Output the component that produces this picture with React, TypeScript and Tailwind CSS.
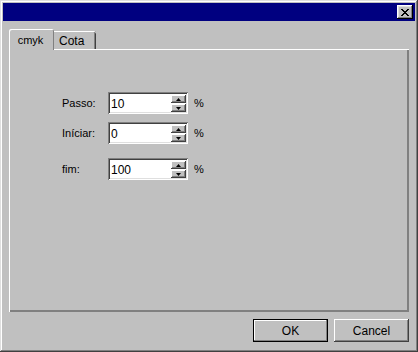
import React from "react";

function SpinArrow({ up }: { up: boolean }) {
  return (
    <svg width="5" height="3" viewBox="0 0 5 3" className="block">
      {up ? (
        <polygon points="2.5,0 5,3 0,3" fill="#000" />
      ) : (
        <polygon points="0,0 5,0 2.5,3" fill="#000" />
      )}
    </svg>
  );
}

function Field({ label, value, mt }: { label: string; value: string; mt: string }) {
  return (
    <div className={`flex items-center ${mt}`}>
      <div className="w-[46px] text-[11px] leading-none">{label}</div>
      <div className="w-[80px] h-[22px] bg-white flex items-center shadow-[inset_1px_1px_#808080,inset_-1px_-1px_#ffffff,inset_2px_2px_#404040,inset_-2px_-2px_#dfdfdf] pl-[3px] pr-[2px]">
        <span className="flex-1 text-[12px] leading-none pt-[1px]">{value}</span>
        <div className="flex flex-col gap-[1px] pt-[1px]">
          <div className="w-[15px] h-[8px] bg-[#c0c0c0] flex items-center justify-center shadow-[inset_-1px_-1px_#404040,inset_1px_1px_#ffffff,inset_-2px_-2px_#808080]">
            <SpinArrow up />
          </div>
          <div className="w-[15px] h-[8px] bg-[#c0c0c0] flex items-center justify-center shadow-[inset_-1px_-1px_#404040,inset_1px_1px_#ffffff,inset_-2px_-2px_#808080]">
            <SpinArrow up={false} />
          </div>
        </div>
      </div>
      <span className="ml-[6px] text-[11px] leading-none">%</span>
    </div>
  );
}

export default function App() {
  return (
    <div
      className="w-[418px] h-[352px] bg-[#c0c0c0] p-[3px] flex flex-col text-black shadow-[inset_-1px_-1px_#404040,inset_1px_1px_#dfdfdf,inset_-2px_-2px_#808080,inset_2px_2px_#ffffff]"
      style={{ fontFamily: '"Liberation Sans", Arial, sans-serif' }}
    >
      {/* Title bar */}
      <div className="h-[18px] bg-[#000080] flex items-center justify-end pr-[2px]">
        <div className="w-[16px] h-[14px] bg-[#c0c0c0] flex items-center justify-center shadow-[inset_-1px_-1px_#000000,inset_1px_1px_#ffffff,inset_-2px_-2px_#808080,inset_2px_2px_#dfdfdf]">
          <svg width="8" height="7" viewBox="0 0 8 7" className="block">
            <path d="M0 0h2v1h1v1h2v-1h1v-1h2v1h-1v1h-1v1h-1v1h1v1h1v1h1v1h-2v-1h-1v-1h-2v1h-1v1h-2v-1h1v-1h1v-1h1v-1h-1v-1h-1v-1h-1z" fill="#000" />
          </svg>
        </div>
      </div>

      {/* Tabs */}
      <div className="mt-[8px] pl-[6px] flex items-end h-[20px]">
        <div className="relative z-10 w-[45px] h-[21px] -mb-[1px] bg-[#c0c0c0] rounded-tl-[2px] rounded-tr-[2px] shadow-[inset_1px_1px_#ffffff,inset_-1px_0_#808080] flex items-start justify-center pt-[5px]">
          <span className="text-[11px] leading-[12px] -ml-[2px]">cmyk</span>
        </div>
        <div className="w-[42px] h-[18px] bg-[#c0c0c0] rounded-tr-[2px] shadow-[inset_0_1px_#ffffff,inset_-1px_0_#404040,inset_-2px_0_#808080] flex items-start pl-[5px] pt-[4px]">
          <span className="text-[12px] leading-[12px]">Cota</span>
        </div>
      </div>

      {/* Panel */}
      <div className="ml-[6px] w-[400px] h-[263px] bg-[#c0c0c0] shadow-[inset_1px_1px_#ffffff,inset_-1px_-1px_#808080,inset_-2px_-2px_#808080] pl-[53px] pt-[43px] flex flex-col">
        <Field label="Passo:" value="10" mt="" />
        <Field label="Iníciar:" value="0" mt="mt-[8px]" />
        <Field label="fim:" value="100" mt="mt-[14px]" />
      </div>

      {/* Buttons */}
      <div className="mt-[7px] flex justify-end gap-[6px] pr-[6px]">
        <div className="w-[75px] h-[23px] flex items-center justify-center text-[12px] shadow-[inset_0_0_0_1px_#000000,inset_-2px_-2px_#808080,inset_2px_2px_#ffffff]">
          OK
        </div>
        <div className="w-[75px] h-[23px] flex items-center justify-center text-[12px] shadow-[inset_-1px_-1px_#404040,inset_1px_1px_#ffffff,inset_-2px_-2px_#808080]">
          Cancel
        </div>
      </div>
    </div>
  );
}
